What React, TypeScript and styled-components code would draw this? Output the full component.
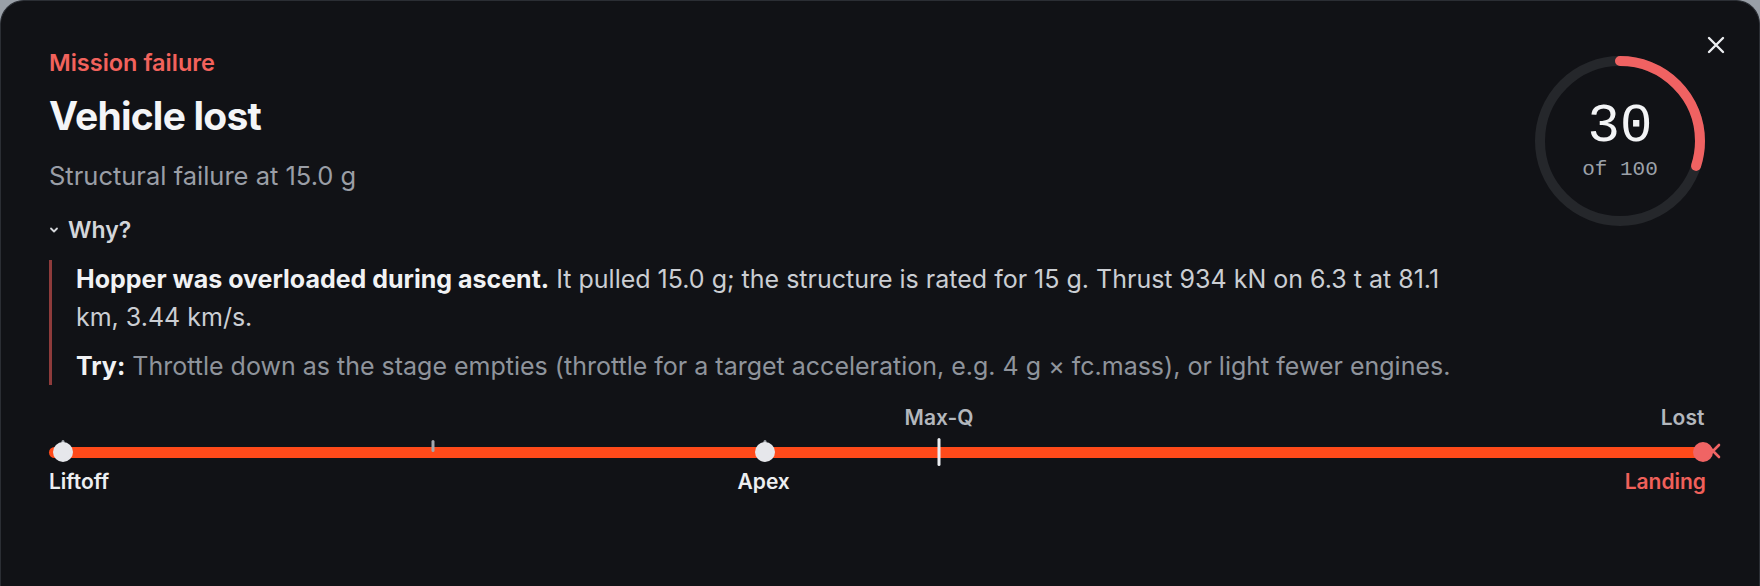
import styled, { createGlobalStyle } from 'styled-components';

const GlobalStyle = createGlobalStyle`
  html, body {
    margin: 0;
    padding: 0;
    height: 100%;
    overflow: hidden;
    background: #9aa0a8;
  }
  body {
    font-family: Inter, 'Noto Sans', sans-serif;
    -webkit-font-smoothing: antialiased;
  }
`;

const Card = styled.section`
  position: relative;
  box-sizing: border-box;
  width: 100%;
  height: 100vh;
  padding: 48px 48px 40px;
  background: #111216;
  border: 1px solid #2b2e34;
  border-bottom: none;
  border-radius: 24px 24px 0 0;
  color: #eceef1;
`;

const CloseButton = styled.button`
  position: absolute;
  top: 33px;
  right: 32px;
  width: 22px;
  height: 22px;
  padding: 0;
  border: none;
  background: none;
  color: #eceef1;
  cursor: pointer;
  display: flex;
  align-items: center;
  justify-content: center;
`;

const Header = styled.header`
  display: flex;
  justify-content: space-between;
  align-items: flex-start;
`;

const Heading = styled.div`
  display: flex;
  flex-direction: column;
`;

const Eyebrow = styled.div`
  font-size: 23.5px;
  line-height: 28px;
  font-weight: 600;
  color: #f2625c;
`;

const Title = styled.h1`
  margin: 15px 0 0;
  font-size: 39px;
  line-height: 48px;
  font-weight: 700;
  letter-spacing: -0.02em;
  color: #f4f5f7;
`;

const Subtitle = styled.div`
  margin-top: 20px;
  font-size: 25.5px;
  line-height: 32px;
  color: #9a9ea6;
`;

const WhyToggle = styled.button`
  margin-top: 24px;
  padding: 0;
  border: none;
  background: none;
  display: flex;
  align-items: center;
  gap: 9px;
  font-family: inherit;
  font-size: 23px;
  line-height: 28px;
  font-weight: 600;
  color: #d4d6da;
  cursor: pointer;
`;

const Gauge = styled.div`
  position: relative;
  width: 170px;
  height: 170px;
  margin: 7px 6px 0 0;
  flex-shrink: 0;
`;

const GaugeLabel = styled.div`
  position: absolute;
  inset: 0;
  padding-top: 43px;
  display: flex;
  flex-direction: column;
  align-items: center;
  font-family: 'Liberation Mono', 'DejaVu Sans Mono', monospace;
  font-variant-numeric: slashed-zero;
`;

const GaugeValue = styled.div`
  font-size: 54px;
  line-height: 56px;
  color: #f3f4f6;
`;

const GaugeTotal = styled.div`
  margin-top: 2px;
  font-size: 21px;
  line-height: 26px;
  color: #9ca1a9;
`;

const Explanation = styled.div`
  margin-top: 16px;
  max-width: 1388px;
  padding-left: 24px;
  border-left: 3px solid #8e3b3b;
  display: flex;
  flex-direction: column;
  gap: 11px;
`;

const Para = styled.p<{ $muted?: boolean }>`
  margin: 0;
  font-size: 25px;
  line-height: 38px;
  color: ${(p) => (p.$muted ? '#8f949c' : '#cbced3')};

  strong {
    font-weight: 700;
    color: #f1f2f4;
  }
`;

const Timeline = styled.div`
  margin-top: 20px;
  display: flex;
  flex-direction: column;
`;

const LabelRow = styled.div<{ $gap?: number }>`
  position: relative;
  height: 26px;
  margin-top: ${(p) => p.$gap ?? 0}px;
`;

const Label = styled.span<{ $align: 'start' | 'center' | 'end'; $tone: 'light' | 'dim' | 'alert' }>`
  position: absolute;
  top: 0;
  white-space: nowrap;
  font-size: 21px;
  line-height: 26px;
  font-weight: 600;
  color: ${(p) => (p.$tone === 'alert' ? '#f0605a' : p.$tone === 'dim' ? '#b3b7bd' : '#eceef1')};
  transform: ${(p) =>
    p.$align === 'center' ? 'translateX(-50%)' : p.$align === 'end' ? 'translateX(-100%)' : 'none'};
`;

const TrackRow = styled.div`
  position: relative;
  height: 30px;
  margin-top: 6px;
  display: flex;
  align-items: center;
`;

const Track = styled.div`
  width: 100%;
  height: 11px;
  border-radius: 6px;
  background: #ff4a1a;
`;

const Tick = styled.span<{ $major?: boolean }>`
  position: absolute;
  top: ${(p) => (p.$major ? 1 : 3)}px;
  width: 3px;
  height: ${(p) => (p.$major ? 28 : 12)}px;
  border-radius: 2px;
  background: ${(p) => (p.$major ? '#eceef1' : '#a3a7ae')};
  transform: translateX(-50%);
`;

const Dot = styled.span<{ $lost?: boolean }>`
  position: absolute;
  top: 5px;
  width: 20px;
  height: 20px;
  border-radius: 50%;
  background: ${(p) => (p.$lost ? '#f06464' : '#e6e7eb')};
  transform: translateX(-50%);
`;

const LostMark = styled.svg`
  position: absolute;
  top: 6px;
  width: 16px;
  height: 16px;
  transform: translateX(-50%);
`;

const RING_R = 80;
const RING_C = 2 * Math.PI * RING_R;

const score = 30;

const ticks = [
  { at: 0.85, major: false },
  { at: 23.1, major: false },
  { at: 43.1, major: false },
  { at: 53.55, major: true },
];

const dots = [
  { at: 0.85, lost: false },
  { at: 43.1, lost: false },
];

export default function App() {
  return (
    <>
      <GlobalStyle />
      <Card>
        <CloseButton aria-label="Close">
          <svg width="20" height="20" viewBox="0 0 20 20">
            <path d="M3 3 L17 17 M17 3 L3 17" stroke="currentColor" strokeWidth="2.4" strokeLinecap="round" />
          </svg>
        </CloseButton>

        <Header>
          <Heading>
            <Eyebrow>Mission failure</Eyebrow>
            <Title>Vehicle lost</Title>
            <Subtitle>Structural failure at 15.0 g</Subtitle>
            <WhyToggle>
              <svg width="10" height="10" viewBox="0 0 10 10">
                <path d="M2 3.5 L5 6.5 L8 3.5" fill="none" stroke="currentColor" strokeWidth="1.8" strokeLinecap="round" strokeLinejoin="round" />
              </svg>
              Why?
            </WhyToggle>
          </Heading>

          <Gauge>
            <svg width="170" height="170" viewBox="0 0 170 170">
              <circle cx="85" cy="85" r={RING_R} fill="none" stroke="#25272b" strokeWidth="10" />
              <circle
                cx="85"
                cy="85"
                r={RING_R}
                fill="none"
                stroke="#f06262"
                strokeWidth="10"
                strokeLinecap="round"
                strokeDasharray={`${(RING_C * score) / 100} ${RING_C}`}
                transform="rotate(-90 85 85)"
              />
            </svg>
            <GaugeLabel>
              <GaugeValue>{score}</GaugeValue>
              <GaugeTotal>of 100</GaugeTotal>
            </GaugeLabel>
          </Gauge>
        </Header>

        <Explanation>
          <Para>
            <strong>Hopper was overloaded during ascent.</strong> It pulled 15.0 g; the structure is rated for 15 g.
            Thrust 934 kN on 6.3 t at 81.1 km, 3.44 km/s.
          </Para>
          <Para $muted>
            <strong>Try:</strong> Throttle down as the stage empties (throttle for a target acceleration, e.g. 4 g ×
            fc.mass), or light fewer engines.
          </Para>
        </Explanation>

        <Timeline>
          <LabelRow>
            <Label $align="center" $tone="dim" style={{ left: '53.55%' }}>
              Max-Q
            </Label>
            <Label $align="end" $tone="dim" style={{ left: '99.6%' }}>
              Lost
            </Label>
          </LabelRow>

          <TrackRow>
            <Track />
            {ticks.map((t) => (
              <Tick key={t.at} $major={t.major} style={{ left: `${t.at}%` }} />
            ))}
            {dots.map((d) => (
              <Dot key={d.at} style={{ left: `${d.at}%` }} />
            ))}
            <LostMark viewBox="0 0 16 16" style={{ left: '100.1%' }}>
              <path d="M2 2 L14 14 M14 2 L2 14" stroke="#f06464" strokeWidth="2.6" strokeLinecap="round" />
            </LostMark>
            <Dot $lost style={{ left: '99.5%' }} />
          </TrackRow>

          <LabelRow $gap={2}>
            <Label $align="start" $tone="light" style={{ left: 0 }}>
              Liftoff
            </Label>
            <Label $align="center" $tone="light" style={{ left: '43%' }}>
              Apex
            </Label>
            <Label $align="end" $tone="alert" style={{ left: '99.7%' }}>
              Landing
            </Label>
          </LabelRow>
        </Timeline>
      </Card>
    </>
  );
}
